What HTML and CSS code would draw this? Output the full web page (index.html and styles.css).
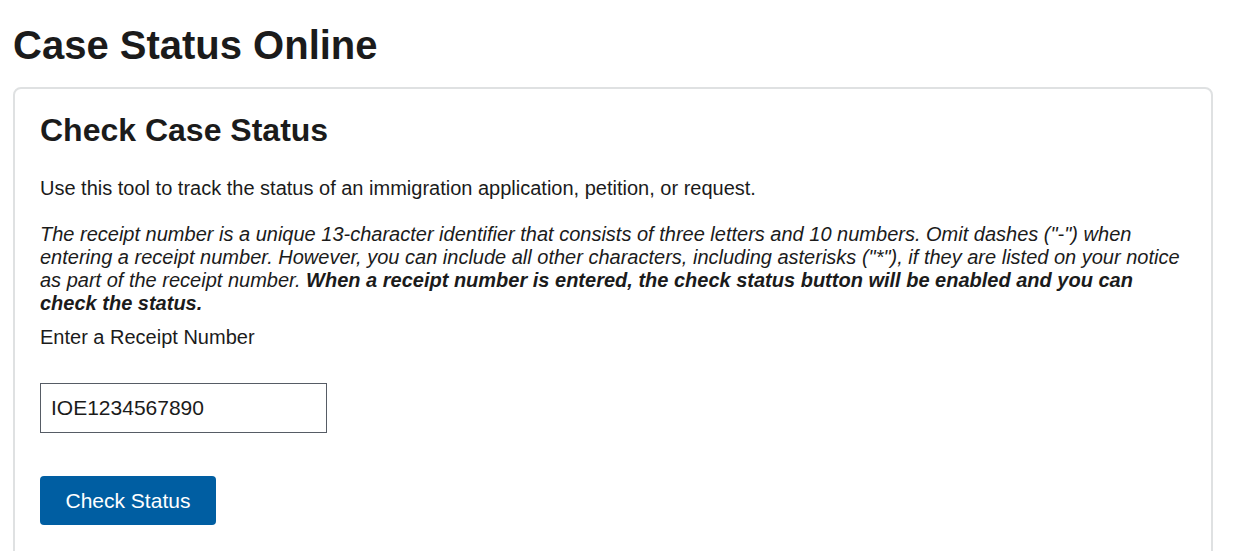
FILE: index.html
```html
<!DOCTYPE html>
<html lang="en">
<head>
<meta charset="utf-8">
<title>Case Status Online</title>
<link rel="stylesheet" href="styles.css">
</head>
<body>
<main class="page">
  <h1 class="page-title">Case Status Online</h1>
  <section class="card">
    <h2 class="card-title">Check Case Status</h2>
    <p class="intro">Use this tool to track the status of an immigration application, petition, or request.</p>
    <p class="note">The receipt number is a unique 13-character identifier that consists of three letters and 10 numbers. Omit dashes ("-") when entering a receipt number. However, you can include all other characters, including asterisks ("*"), if they are listed on your notice as part of the receipt number. <strong>When a receipt number is entered, the check status button will be enabled and you can check the status.</strong></p>
    <label class="field-label" for="receipt">Enter a Receipt Number</label>
    <input class="field-input" id="receipt" type="text" value="IOE1234567890">
    <button class="btn-primary" type="button">Check Status</button>
  </section>
</main>
</body>
</html>
```
FILE: styles.css
```css
html, body {
  margin: 0;
  padding: 0;
  background: #ffffff;
}

body {
  font-family: "Liberation Sans", Arial, sans-serif;
  color: #1b1b1b;
}

.page {
  padding: 0 29px 0 13px;
}

.page-title {
  margin: 21px 0 18px;
  font-size: 40px;
  line-height: 48px;
  font-weight: 700;
}

.card {
  display: flex;
  flex-direction: column;
  align-items: flex-start;
  border: 2px solid #dfe1e2;
  border-radius: 8px;
  padding: 22px 25px 40px;
}

.card-title {
  margin: 0 0 28px;
  font-size: 32px;
  line-height: 38.4px;
  font-weight: 700;
}

.intro,
.note,
.field-label {
  margin: 0;
  font-size: 20px;
  line-height: 22px;
}

.note {
  margin-top: 24px;
  line-height: 23px;
  font-style: italic;
}

.note strong {
  font-weight: 700;
}

.field-label {
  margin-top: 11px;
}

.field-input {
  margin: 35px 0 0;
  box-sizing: border-box;
  width: 287px;
  height: 50px;
  padding: 0 10px;
  border: 1px solid #565c65;
  border-radius: 0;
  font-family: "Liberation Sans", Arial, sans-serif;
  font-size: 21px;
  color: #1b1b1b;
  background: #ffffff;
}

.btn-primary {
  margin-top: 43px;
  padding: 14px 25.5px;
  border: 0;
  border-radius: 4px;
  background: #005ea2;
  color: #ffffff;
  font-family: "Liberation Sans", Arial, sans-serif;
  font-size: 21px;
  line-height: 21px;
  font-weight: 400;
  cursor: pointer;
}
```
